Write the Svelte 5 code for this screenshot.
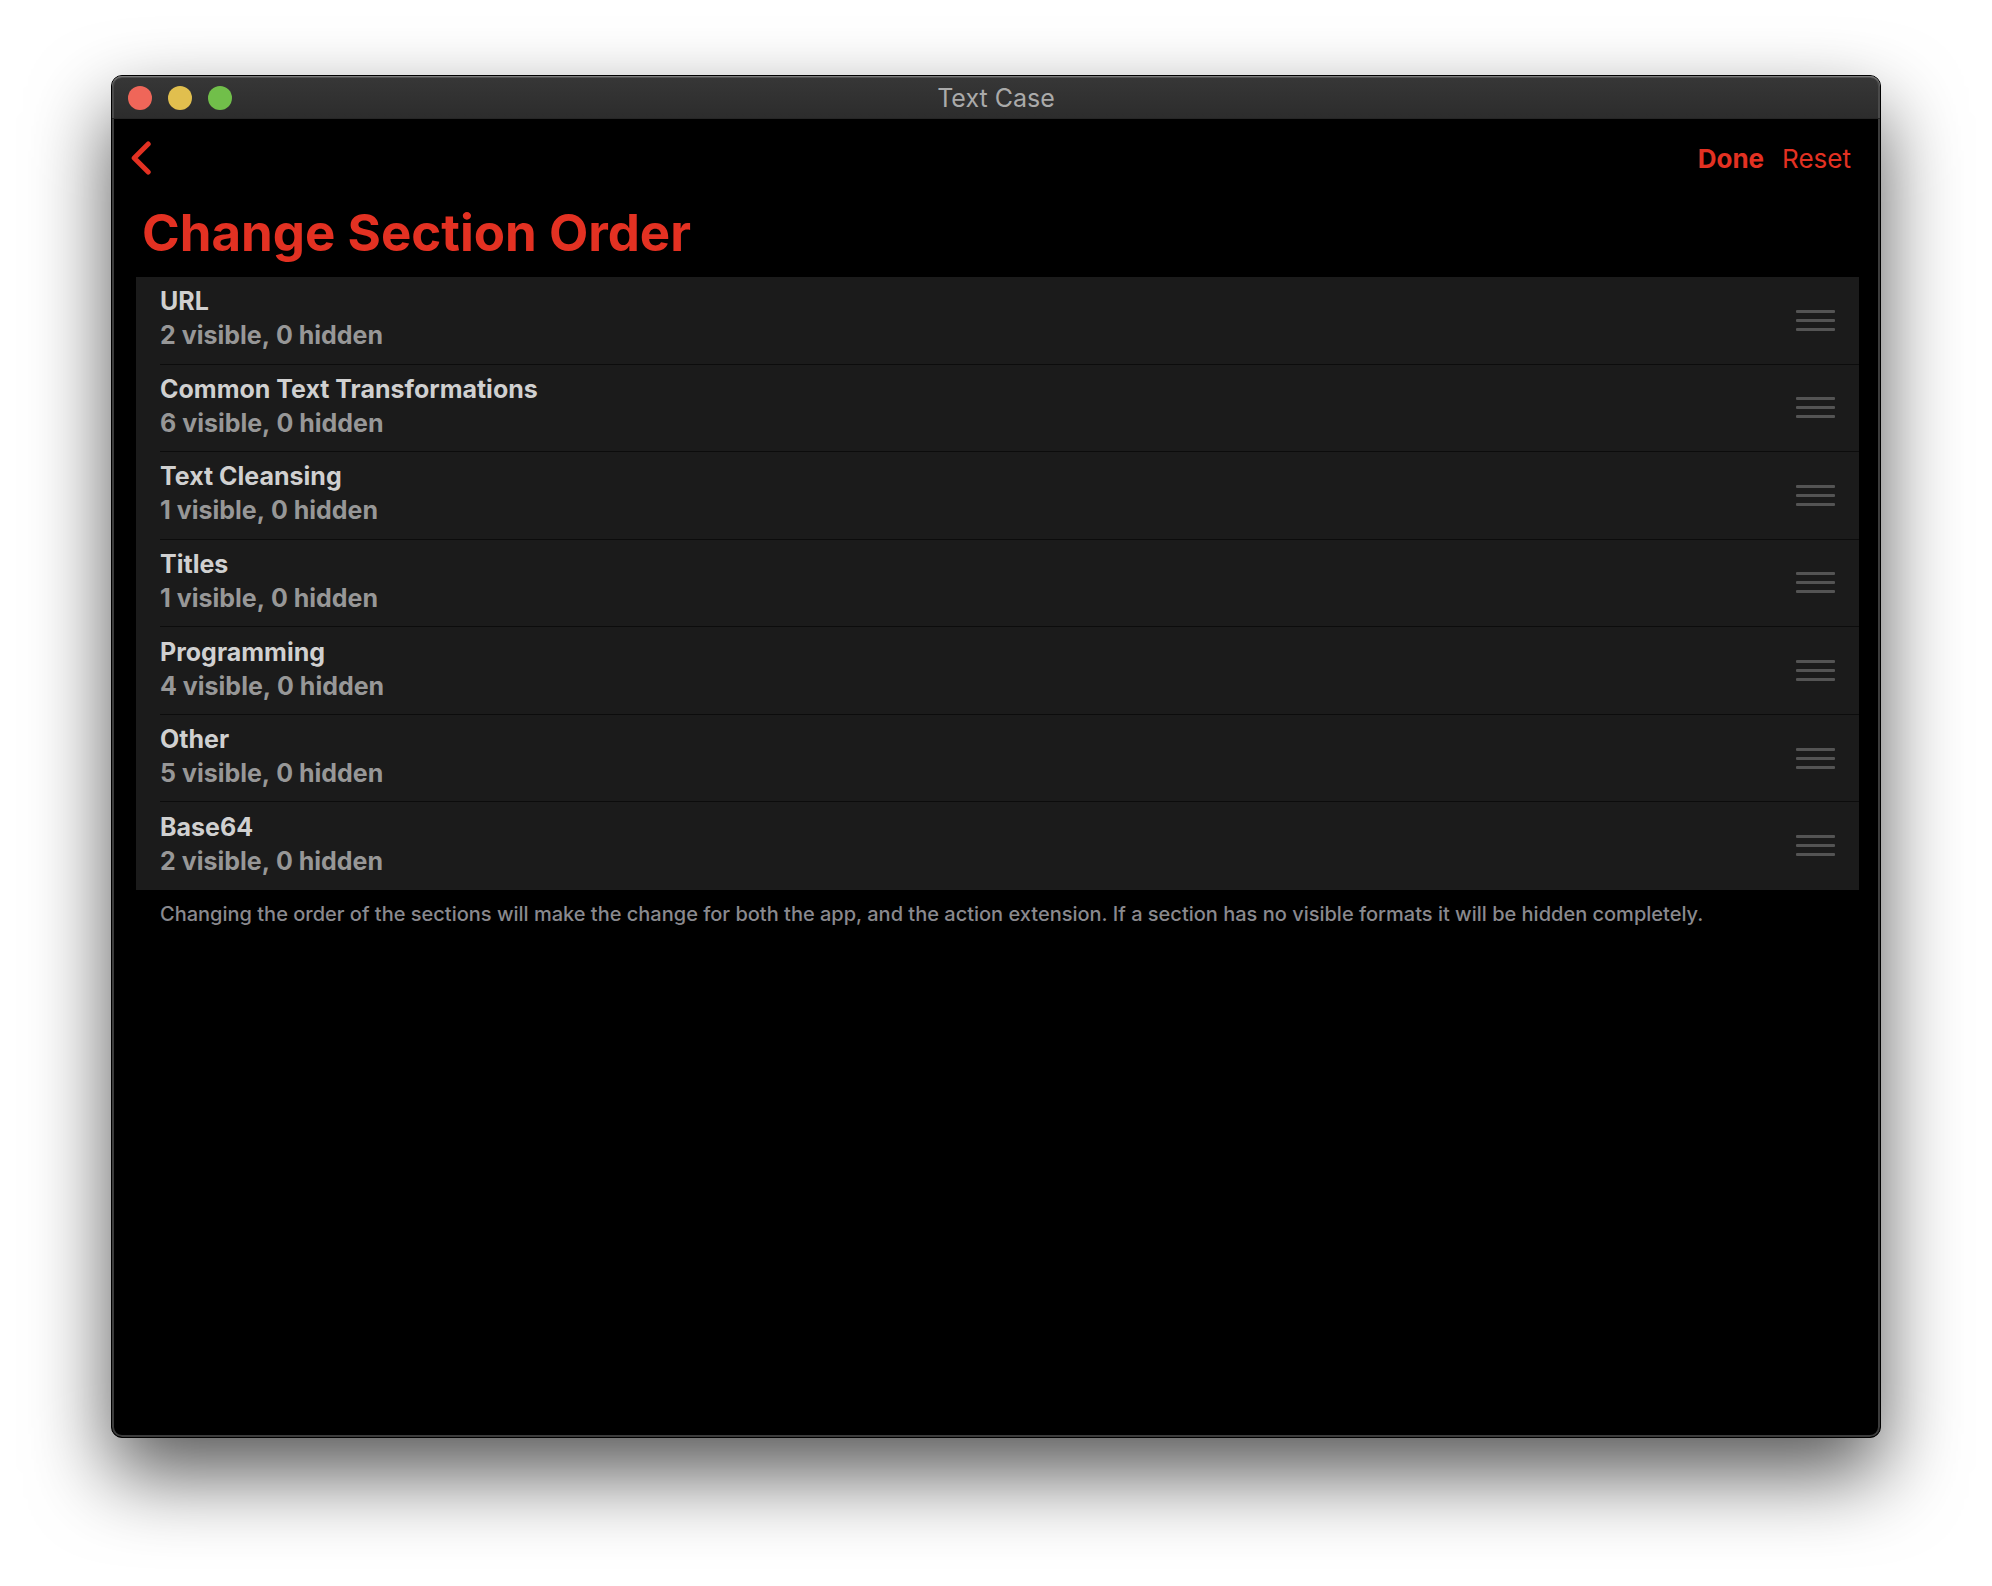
<script>
  const sections = [
    { name: 'URL', visible: 2, hidden: 0 },
    { name: 'Common Text Transformations', visible: 6, hidden: 0 },
    { name: 'Text Cleansing', visible: 1, hidden: 0 },
    { name: 'Titles', visible: 1, hidden: 0 },
    { name: 'Programming', visible: 4, hidden: 0 },
    { name: 'Other', visible: 5, hidden: 0 },
    { name: 'Base64', visible: 2, hidden: 0 },
  ];
</script>

<div class="desktop">
  <div class="window">
    <header class="titlebar">
      <div class="lights">
        <button class="light close" aria-label="Close"></button>
        <button class="light minimize" aria-label="Minimize"></button>
        <button class="light zoom" aria-label="Zoom"></button>
      </div>
      <span class="window-title">Text Case</span>
    </header>

    <main class="content">
      <nav class="toolbar">
        <button class="action back" aria-label="Back">
          <svg width="20" height="34" viewBox="0 0 20 34" aria-hidden="true">
            <path d="M17.2 3 L3.2 17 L17.2 31" />
          </svg>
        </button>
        <div class="actions">
          <button class="action done">Done</button>
          <button class="action">Reset</button>
        </div>
      </nav>

      <h1>Change Section Order</h1>

      <ul class="sections">
        {#each sections as section}
          <li>
            <div class="label">
              <span class="name">{section.name}</span>
              <span class="count">{section.visible} visible, {section.hidden} hidden</span>
            </div>
            <button class="handle" aria-label="Reorder {section.name}">
              <svg width="39" height="21" viewBox="0 0 39 21" aria-hidden="true">
                <rect width="39" height="3" rx="1" />
                <rect y="9" width="39" height="3" rx="1" />
                <rect y="18" width="39" height="3" rx="1" />
              </svg>
            </button>
          </li>
        {/each}
      </ul>

      <p class="note">
        Changing the order of the sections will make the change for both the app, and the action
        extension. If a section has no visible formats it will be hidden completely.
      </p>
    </main>
  </div>
</div>

<style>
  :global(body) {
    margin: 0;
    background: #fff;
  }

  .desktop {
    box-sizing: border-box;
    display: flex;
    min-height: 100vh;
    padding: 75px 111px 148px;
    overflow: hidden;
    font-family: Inter, 'Liberation Sans', sans-serif;
  }

  .window {
    flex: 1;
    display: flex;
    flex-direction: column;
    border: 1px solid #000;
    border-radius: 11px;
    background: #000;
    box-shadow:
      inset 0 1px #7c7c7c,
      inset 0 0 0 2px #3c3c3c,
      0 36px 80px rgba(0, 0, 0, 0.66);
  }

  .titlebar {
    display: grid;
    grid-template-columns: 1fr auto 1fr;
    align-items: center;
    box-sizing: border-box;
    height: 43px;
    padding: 2px 16px 0;
    border-bottom: 1px solid #262626;
    border-radius: 10px 10px 0 0;
    background: linear-gradient(#373737, #2c2c2c);
    box-shadow:
      inset 0 1px #7c7c7c,
      inset 0 2px #505050,
      inset 2px 0 #4a4a4a,
      inset -2px 0 #4a4a4a;
  }

  .lights {
    display: flex;
    gap: 16px;
  }

  button {
    padding: 0;
    border: 0;
    background: none;
    font: inherit;
  }

  .light {
    width: 24px;
    height: 24px;
    border-radius: 50%;
  }

  .close {
    background: #ef6659;
  }

  .minimize {
    background: #e1bf4e;
  }

  .zoom {
    background: #71bf4a;
  }

  .window-title {
    color: #aaa;
    font-size: 25px;
    line-height: 34px;
  }

  .content {
    padding: 0 21px 24px 24px;
  }

  .toolbar {
    display: flex;
    align-items: center;
    justify-content: space-between;
    height: 78px;
    margin-left: -5px;
    padding-right: 8px;
  }

  .action {
    color: #e33122;
    font-size: 26px;
    line-height: 34px;
  }

  .back svg {
    display: block;
    fill: none;
    stroke: #e33122;
    stroke-width: 5;
    stroke-linecap: round;
    stroke-linejoin: round;
  }

  .actions {
    display: flex;
    gap: 18px;
    padding-top: 2px;
  }

  .done {
    font-weight: 700;
  }

  h1 {
    margin: 0;
    padding: 5px 0 13px 6px;
    color: #e33122;
    font-size: 51px;
    font-weight: 700;
    line-height: 62px;
  }

  .sections {
    display: grid;
    grid-auto-rows: 1fr;
    min-height: 613px;
    margin: 0;
    padding: 0 0 0 24px;
    background: #1b1b1b;
    list-style: none;
  }

  li {
    display: flex;
    align-items: center;
    justify-content: space-between;
    padding-right: 24px;
    border-bottom: 1px solid #0c0c0c;
  }

  li:last-child {
    border-bottom-color: transparent;
  }

  .label {
    display: flex;
    flex-direction: column;
    padding-bottom: 4px;
    font-size: 25px;
    font-weight: 700;
    line-height: 34px;
  }

  .name {
    color: #d0d0d0;
  }

  .count {
    color: #979797;
    font-kerning: none;
  }

  .handle svg {
    display: block;
    fill: #545454;
  }

  .note {
    margin: 0;
    padding: 11px 24px;
    color: #89898e;
    font-size: 20px;
    font-weight: 500;
    line-height: 26px;
  }
</style>
